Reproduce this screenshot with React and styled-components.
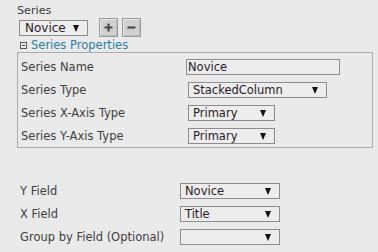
import React from "react";
import styled, { createGlobalStyle } from "styled-components";

const Global = createGlobalStyle`
  html, body { margin: 0; padding: 0; background: #e9e9e9; }
  body { font-family: "DejaVu Sans", Verdana, sans-serif; font-size: 11px; color: #3a3a3a; }
`;

const Page = styled.div`
  width: 378px;
  height: 252px;
  box-sizing: border-box;
  padding: 4px 6px 0 17px;
  overflow: hidden;
`;

const Label = styled.div`
  line-height: 13px;
  height: 13px;
  font-size: 11.2px;
`;

const TopRow = styled.div`
  display: flex;
  align-items: center;
  height: 19px;
  margin-top: 1px;
  padding-left: 2px;
`;

const SelectBox = styled.div`
  position: relative;
  box-sizing: border-box;
  width: ${p => p.$w}px;
  height: ${p => p.$h || 16}px;
  margin-left: ${p => p.$ml || 0}px;
  border: 1px solid #8c8c8c;
  background: #ececec;
  color: #2a1a2a;
  font-size: ${p => p.$fs || 11.5}px;
  line-height: ${p => (p.$h || 16) - 2}px;
  padding-left: ${p => p.$pl ?? 4}px;
  white-space: nowrap;
`;

const Arrow = styled.span`
  position: absolute;
  right: 8px;
  top: 50%;
  margin-top: -3px;
  width: 0;
  height: 0;
  border-left: 3.5px solid transparent;
  border-right: 3.5px solid transparent;
  border-top: 7px solid #111;
`;

const TextInput = styled.div`
  box-sizing: border-box;
  width: ${p => p.$w}px;
  height: 16px;
  border: 1px solid #8c8c8c;
  background: #ececec;
  color: #2a1a2a;
  font-size: 11.5px;
  line-height: 14px;
  padding-left: 1px;
`;

const IconButton = styled.div`
  box-sizing: border-box;
  width: 19px;
  height: 19px;
  margin-left: ${p => p.$ml}px;
  border: 1px solid #9a9a9a;
  background: #d0d0d0;
  box-shadow: inset 1px 1px 0 #e6e6e6, inset -1px -1px 0 #bdbdbd;
  display: flex;
  align-items: center;
  justify-content: center;
`;

const Header = styled.div`
  display: flex;
  align-items: center;
  height: 13px;
  margin-top: 2px;
  padding-left: 3px;
  color: #2d7ea6;
  font-size: 11.5px;
  line-height: 13px;
`;

const CollapseIcon = styled.span`
  box-sizing: border-box;
  width: 7px;
  height: 7px;
  border: 1px solid #555;
  margin-right: 4px;
  position: relative;
  &::after {
    content: "";
    position: absolute;
    left: 1px;
    right: 1px;
    top: 2px;
    height: 1px;
    background: #444;
  }
`;

const Fieldset = styled.div`
  box-sizing: border-box;
  width: 356px;
  height: 96px;
  border: 1px solid #ababab;
  padding: 2px 0 0 3px;
`;

const FormRow = styled.div`
  display: grid;
  grid-template-columns: ${p => p.$col}px 1fr;
  align-items: center;
  height: 23px;
`;

const Bottom = styled.div`
  margin-top: 31px;
  padding-left: 3px;
`;

const RowLabel = styled.span`
  font-size: 11.5px;
  color: #404040;
  white-space: nowrap;
`;

function Select({ w, value, ml, pl, fs }) {
  return (
    <SelectBox $w={w} $ml={ml} $pl={pl} $fs={fs}>
      {value}
      <Arrow />
    </SelectBox>
  );
}

export default function App() {
  return (
    <Page>
      <Global />
      <Label>Series</Label>
      <TopRow>
        <Select w={69} value="Novice" pl={5} fs={12} />
        <IconButton $ml={11}>
          <svg width="11" height="11" viewBox="0 0 11 11">
            <path d="M5.5 1.5v8M1.5 5.5h8" stroke="#4a4a4a" strokeWidth="2.2" />
          </svg>
        </IconButton>
        <IconButton $ml={4}>
          <svg width="11" height="11" viewBox="0 0 11 11">
            <path d="M1.5 5.5h8" stroke="#4a4a4a" strokeWidth="2.2" />
          </svg>
        </IconButton>
      </TopRow>
      <Header>
        <CollapseIcon />
        Series Properties
      </Header>
      <Fieldset>
        <FormRow $col={165}>
          <RowLabel>Series Name</RowLabel>
          <TextInput $w={154}>Novice</TextInput>
        </FormRow>
        <FormRow $col={165}>
          <RowLabel>Series Type</RowLabel>
          <Select w={139} ml={2} value="StackedColumn" />
        </FormRow>
        <FormRow $col={165}>
          <RowLabel>Series X-Axis Type</RowLabel>
          <Select w={87} ml={2} value="Primary" />
        </FormRow>
        <FormRow $col={165}>
          <RowLabel>Series Y-Axis Type</RowLabel>
          <Select w={87} ml={2} value="Primary" />
        </FormRow>
      </Fieldset>
      <Bottom>
        <FormRow $col={160}>
          <RowLabel>Y Field</RowLabel>
          <Select w={100} value="Novice" />
        </FormRow>
        <FormRow $col={160}>
          <RowLabel>X Field</RowLabel>
          <Select w={100} value="Title" />
        </FormRow>
        <FormRow $col={160}>
          <RowLabel>Group by Field (Optional)</RowLabel>
          <Select w={100} value="" />
        </FormRow>
      </Bottom>
    </Page>
  );
}
